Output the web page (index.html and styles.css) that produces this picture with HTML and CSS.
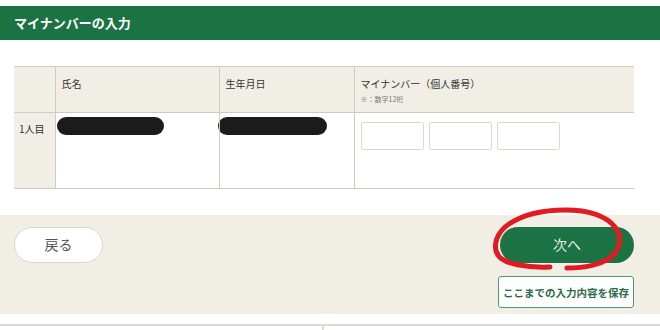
FILE: index.html
```html
<!DOCTYPE html>
<html lang="ja">
<head>
<meta charset="utf-8">
<link rel="stylesheet" href="styles.css">
</head>
<body>
<div class="page">
  <div class="title">マイナンバーの入力</div>
  <div class="content">
    <table class="grid">
      <colgroup>
        <col class="c1"><col class="c2"><col class="c3"><col class="c4">
      </colgroup>
      <thead>
        <tr>
          <th></th>
          <th>氏名</th>
          <th>生年月日</th>
          <th>マイナンバー（個人番号）<span class="note">※：数字12桁</span></th>
        </tr>
      </thead>
      <tbody>
        <tr>
          <th class="rowhead">1人目</th>
          <td><span class="redact r1"></span></td>
          <td><span class="redact r2"></span></td>
          <td>
            <div class="inputs">
              <input class="box" type="text">
              <input class="box" type="text">
              <input class="box" type="text">
            </div>
          </td>
        </tr>
      </tbody>
    </table>
  </div>
  <div class="footer">
    <button class="back">戻る</button>
    <div class="right">
      <button class="next">次へ</button>
      <button class="save">ここまでの入力内容を保存</button>
    </div>
  </div>
  <div class="bottom">
    <div class="bcell first"></div>
    <div class="bcell"></div>
  </div>
  <svg class="scribble" width="660" height="330" viewBox="0 0 660 330">
    <path d="M550 267 C528 268 503 264 498 255 C492 246 497 232 509 224 C524 214 545 210 565 210 C588 210 606 216 615 227 C623 238 620 250 610 258 C598 266 582 268 567 268" fill="none" stroke="#e01b22" stroke-width="5" stroke-linecap="round"/>
  </svg>
</div>
</body>
</html>
```

FILE: styles.css
```css
* { box-sizing: border-box; }
html, body { margin: 0; padding: 0; background: #fff; }
body {
  font-family: "Noto Sans CJK JP", "Noto Sans", sans-serif;
  color: #333;
  width: 660px;
  height: 330px;
  overflow: hidden;
}
.page { position: relative; padding-top: 6px; }
.title {
  height: 34px;
  background: #1b7343;
  color: #fff;
  font-weight: bold;
  font-size: 13px;
  line-height: 34px;
  padding-left: 14px;
}
.content { padding: 26px 26px 0 14px; }
.grid {
  width: 620px;
  border-collapse: collapse;
  table-layout: fixed;
}
.c1 { width: 41px; }
.c2 { width: 164px; }
.c3 { width: 135px; }
.c4 { width: 280px; }
.grid th, .grid td {
  border: 1px solid #cfcbc4;
  text-align: left;
  vertical-align: top;
  font-weight: normal;
}
.grid tr > :first-child { border-left: none; }
.grid tr > :last-child { border-right: none; }
.grid thead th {
  background: #f1eee5;
  height: 46px;
  font-size: 10px;
  line-height: 14px;
  padding: 10px 6px 0 6px;
}
.note {
  display: block;
  font-size: 7px;
  line-height: 10px;
  color: #777;
  margin-top: 3px;
}
.grid tbody th, .grid tbody td { height: 76px; }
.rowhead {
  background: #f1eee5;
  font-size: 10px;
  line-height: 14px;
  padding: 9px 0 0 5px;
}
.grid tbody td { padding: 4px 0 0 1px; background: #fff; }
.redact {
  display: block;
  height: 18px;
  background: #1c1c1c;
  border-radius: 9px;
}
.r1 { width: 107px; }
.r2 { width: 109px; margin-left: -3px; }
.inputs { display: flex; gap: 5px; padding: 5px 0 0 5px; }
.box {
  width: 63px;
  height: 28px;
  border: 1px solid #dcd8d0;
  border-radius: 2px;
  background: #fff;
  margin: 0;
  padding: 0;
}
.footer {
  margin-top: 26px;
  height: 99px;
  background: #f1eee5;
  padding: 12px 26px 0 14px;
  display: flex;
  justify-content: space-between;
  align-items: flex-start;
}
.back {
  width: 89px;
  height: 36px;
  border: 1px solid #ddd6c8;
  border-radius: 18px;
  background: #fff;
  color: #555;
  font-family: inherit;
  font-size: 14px;
  padding: 0 0 3px 0;
}
.right {
  display: flex;
  flex-direction: column;
  align-items: flex-end;
  gap: 13px;
}
.next {
  width: 134px;
  height: 36px;
  border: none;
  border-radius: 18px;
  background: #1b7343;
  color: #e3efe4;
  font-family: inherit;
  font-size: 14px;
  padding: 0 0 3px 0;
}
.save {
  width: 136px;
  height: 32px;
  border: 1px solid #4f9a6c;
  border-radius: 3px;
  background: #fff;
  color: #2b6a46;
  font-family: inherit;
  font-weight: bold;
  font-size: 10.5px;
  padding: 0;
  white-space: nowrap;
}
.bottom {
  margin-top: 10px;
  display: grid;
  grid-template-columns: 324px 1fr;
  border-top: 2px solid #dcdad6;
  height: 10px;
}
.bcell.first { border-right: 2px solid #dcdad6; }
.scribble { position: absolute; left: 0; top: 0; pointer-events: none; }
```
